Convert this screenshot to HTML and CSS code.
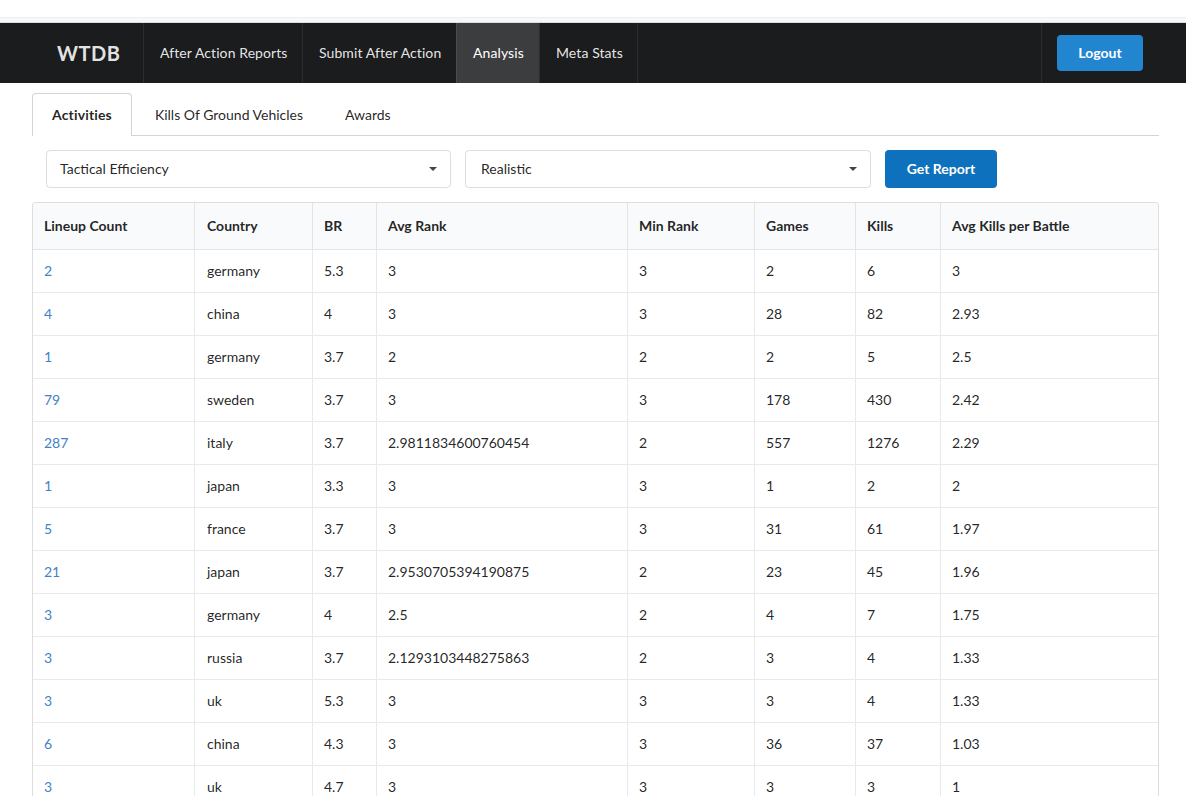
FILE: index.html
```html
<!DOCTYPE html>
<html lang="en">
<head>
<meta charset="utf-8">
<title>WTDB</title>
<link rel="stylesheet" href="styles.css">
</head>
<body>
<div class="topstrip"></div>
<nav class="navbar">
  <a class="brand">WTDB</a>
  <a class="nav-item nav-reports">After Action Reports</a>
  <a class="nav-item nav-submit">Submit After Action</a>
  <a class="nav-item nav-analysis active">Analysis</a>
  <a class="nav-item nav-meta">Meta Stats</a>
  <div class="nav-right"><button class="btn-logout">Logout</button></div>
</nav>
<main class="content">
  <div class="tabs">
    <a class="tab active">Activities</a>
    <a class="tab">Kills Of Ground Vehicles</a>
    <a class="tab">Awards</a>
  </div>
  <form class="filters">
    <div class="select select-first"><span>Tactical Efficiency</span><i class="caret"></i></div>
    <div class="select select-second"><span>Realistic</span><i class="caret"></i></div>
    <button type="button" class="btn-report">Get Report</button>
  </form>
  <div class="table-wrap">
  <table class="report">
    <colgroup>
      <col class="c1"><col class="c2"><col class="c3"><col class="c4"><col class="c5"><col class="c6"><col class="c7"><col class="c8">
    </colgroup>
    <thead>
      <tr><th>Lineup Count</th><th>Country</th><th>BR</th><th>Avg Rank</th><th>Min Rank</th><th>Games</th><th>Kills</th><th>Avg Kills per Battle</th></tr>
    </thead>
    <tbody>
      <tr><td><a>2</a></td><td>germany</td><td>5.3</td><td>3</td><td>3</td><td>2</td><td>6</td><td>3</td></tr>
      <tr><td><a>4</a></td><td>china</td><td>4</td><td>3</td><td>3</td><td>28</td><td>82</td><td>2.93</td></tr>
      <tr><td><a>1</a></td><td>germany</td><td>3.7</td><td>2</td><td>2</td><td>2</td><td>5</td><td>2.5</td></tr>
      <tr><td><a>79</a></td><td>sweden</td><td>3.7</td><td>3</td><td>3</td><td>178</td><td>430</td><td>2.42</td></tr>
      <tr><td><a>287</a></td><td>italy</td><td>3.7</td><td>2.9811834600760454</td><td>2</td><td>557</td><td>1276</td><td>2.29</td></tr>
      <tr><td><a>1</a></td><td>japan</td><td>3.3</td><td>3</td><td>3</td><td>1</td><td>2</td><td>2</td></tr>
      <tr><td><a>5</a></td><td>france</td><td>3.7</td><td>3</td><td>3</td><td>31</td><td>61</td><td>1.97</td></tr>
      <tr><td><a>21</a></td><td>japan</td><td>3.7</td><td>2.9530705394190875</td><td>2</td><td>23</td><td>45</td><td>1.96</td></tr>
      <tr><td><a>3</a></td><td>germany</td><td>4</td><td>2.5</td><td>2</td><td>4</td><td>7</td><td>1.75</td></tr>
      <tr><td><a>3</a></td><td>russia</td><td>3.7</td><td>2.1293103448275863</td><td>2</td><td>3</td><td>4</td><td>1.33</td></tr>
      <tr><td><a>3</a></td><td>uk</td><td>5.3</td><td>3</td><td>3</td><td>3</td><td>4</td><td>1.33</td></tr>
      <tr><td><a>6</a></td><td>china</td><td>4.3</td><td>3</td><td>3</td><td>36</td><td>37</td><td>1.03</td></tr>
      <tr><td><a>3</a></td><td>uk</td><td>4.7</td><td>3</td><td>3</td><td>3</td><td>3</td><td>1</td></tr>
    </tbody>
  </table>
  </div>
</main>
</body>
</html>
```
FILE: styles.css
```css
* { box-sizing: border-box; }
html, body { margin: 0; padding: 0; height: 796px; overflow: hidden; background: #fff; }
body { font-family: Lato, "Liberation Sans", sans-serif; font-size: 14px; line-height: 20px; color: rgba(0,0,0,.87); }
.topstrip { height: 23px; border-bottom: 1px solid #dcdcdc; background: linear-gradient(#fff 0, #fff 17px, #eee 17px, #eee 18px, #f8f8f8 18px); }
.navbar { display: flex; align-items: stretch; height: 60px; background: #1b1c1d; padding-left: 44px; color: rgba(255,255,255,.9); }
.brand { width: 99px; display: flex; align-items: center; padding-left: 13px; font-size: 20px; font-weight: 700; letter-spacing: .5px; color: rgba(255,255,255,.9); }
.nav-item { display: flex; align-items: center; padding: 0 0 0 16px; border-left: 1px solid rgba(255,255,255,.08); letter-spacing: .09px; white-space: nowrap; }
.nav-reports { width: 159px; }
.nav-submit { width: 154px; }
.nav-analysis { width: 83px; }
.nav-meta { width: 99px; border-right: 1px solid rgba(255,255,255,.08); }
.nav-item.active { background: rgba(255,255,255,.15); color: #fff; }
.nav-right { margin-left: auto; width: 145px; display: flex; align-items: center; padding-left: 15px; border-left: 1px solid rgba(255,255,255,.08); }
button { font-family: inherit; font-size: 14px; font-weight: 700; color: #fff; border: 0; cursor: pointer; padding: 0 0 2px; }
.btn-logout { width: 86px; height: 36px; background: #2185d0; border-radius: 4px; }
.content { padding: 10px 27px 0 32px; }
.tabs { display: flex; height: 43px; border-bottom: 1px solid #d4d4d5; }
.tab { display: flex; align-items: center; padding: 0 21px; height: 43px; }
.tab.active { margin: 0 2px -1px 0; background: #fff; border: 1px solid #d4d4d5; border-bottom: 0; border-radius: 4px 4px 0 0; font-weight: 700; padding: 0 19px; letter-spacing: .15px; }
.filters { display: flex; align-items: stretch; gap: 14px; margin: 14px 0 14px 14px; height: 38px; }
.select { display: flex; align-items: center; justify-content: space-between; border: 1px solid rgba(34,36,38,.15); border-radius: 4px; }
.select-first { width: 405px; padding: 0 13px; }
.select-second { width: 406px; padding: 0 13px 0 15px; }
.caret { width: 0; height: 0; border-left: 4px solid transparent; border-right: 4px solid transparent; border-top: 4px solid #444; }
.btn-report { width: 112px; background: #0e71bd; border-radius: 4px; }
.table-wrap { border: 1px solid rgba(34,36,38,.15); border-bottom: 0; border-radius: 4px 4px 0 0; overflow: hidden; }
.report { width: 100%; table-layout: fixed; border-collapse: separate; border-spacing: 0; }
.c1 { width: 161px; } .c2 { width: 118px; } .c3 { width: 64px; } .c4 { width: 251px; }
.c5 { width: 127px; } .c6 { width: 101px; } .c7 { width: 85px; } .c8 { width: auto; }
.report th, .report td { text-align: left; padding: 0 11px; border-left: 1px solid rgba(34,36,38,.1); }
.report th:first-child, .report td:first-child { border-left: 0; }
.report th:nth-child(2), .report td:nth-child(2) { padding-left: 12px; }
.report th { height: 47px; background: #f9fafb; font-weight: 700; border-bottom: 1px solid rgba(34,36,38,.1); }
.report td { height: 43px; border-bottom: 1px solid rgba(34,36,38,.1); }
.report a { color: #4183c4; }
```
